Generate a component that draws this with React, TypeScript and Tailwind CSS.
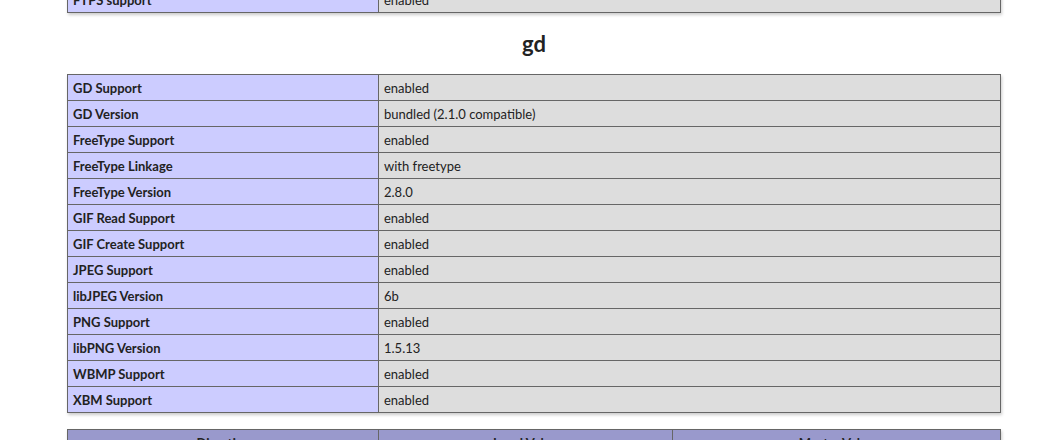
const rows: [string, string][] = [
  ["GD Support", "enabled"],
  ["GD Version", "bundled (2.1.0 compatible)"],
  ["FreeType Support", "enabled"],
  ["FreeType Linkage", "with freetype"],
  ["FreeType Version", "2.8.0"],
  ["GIF Read Support", "enabled"],
  ["GIF Create Support", "enabled"],
  ["JPEG Support", "enabled"],
  ["libJPEG Version", "6b"],
  ["PNG Support", "enabled"],
  ["libPNG Version", "1.5.13"],
  ["WBMP Support", "enabled"],
  ["XBM Support", "enabled"],
];

const cell = "border border-[#666] px-[5px] pt-[5px] pb-[3px] leading-[17px] align-baseline";

function InfoTable({ data }: { data: [string, string][] }) {
  return (
    <table className="w-[934px] border-collapse shadow-[1px_2px_3px_#ccc] text-left">
      <tbody>
        {data.map(([k, v]) => (
          <tr key={k}>
            <td className={`${cell} w-[311px] bg-[#ccf] font-bold`}>{k}</td>
            <td className={`${cell} bg-[#ddd]`}>{v}</td>
          </tr>
        ))}
      </tbody>
    </table>
  );
}

export default function App() {
  return (
    <div
      className="bg-white text-[#222] text-[13px] overflow-hidden h-[440px]"
      style={{ fontFamily: "Lato, 'Noto Sans', sans-serif" }}
    >
      <div className="ml-[67px] w-[934px] -mt-[14px] flex flex-col">
        <InfoTable data={[["FTPS support", "enabled"]]} />
        <h2 className="text-center text-[22px] font-bold leading-[28px] mt-[17px] mb-[16px]">gd</h2>
        <InfoTable data={rows} />
        <table className="mt-[16px] w-[934px] border-collapse shadow-[1px_2px_3px_#ccc]">
          <thead>
            <tr className="bg-[#99c] font-bold">
              <th className={`${cell} w-[311px] text-center`}>Directive</th>
              <th className={`${cell} w-[294px] text-center`}>Local Value</th>
              <th className={`${cell} text-center`}>Master Value</th>
            </tr>
          </thead>
        </table>
      </div>
    </div>
  );
}
